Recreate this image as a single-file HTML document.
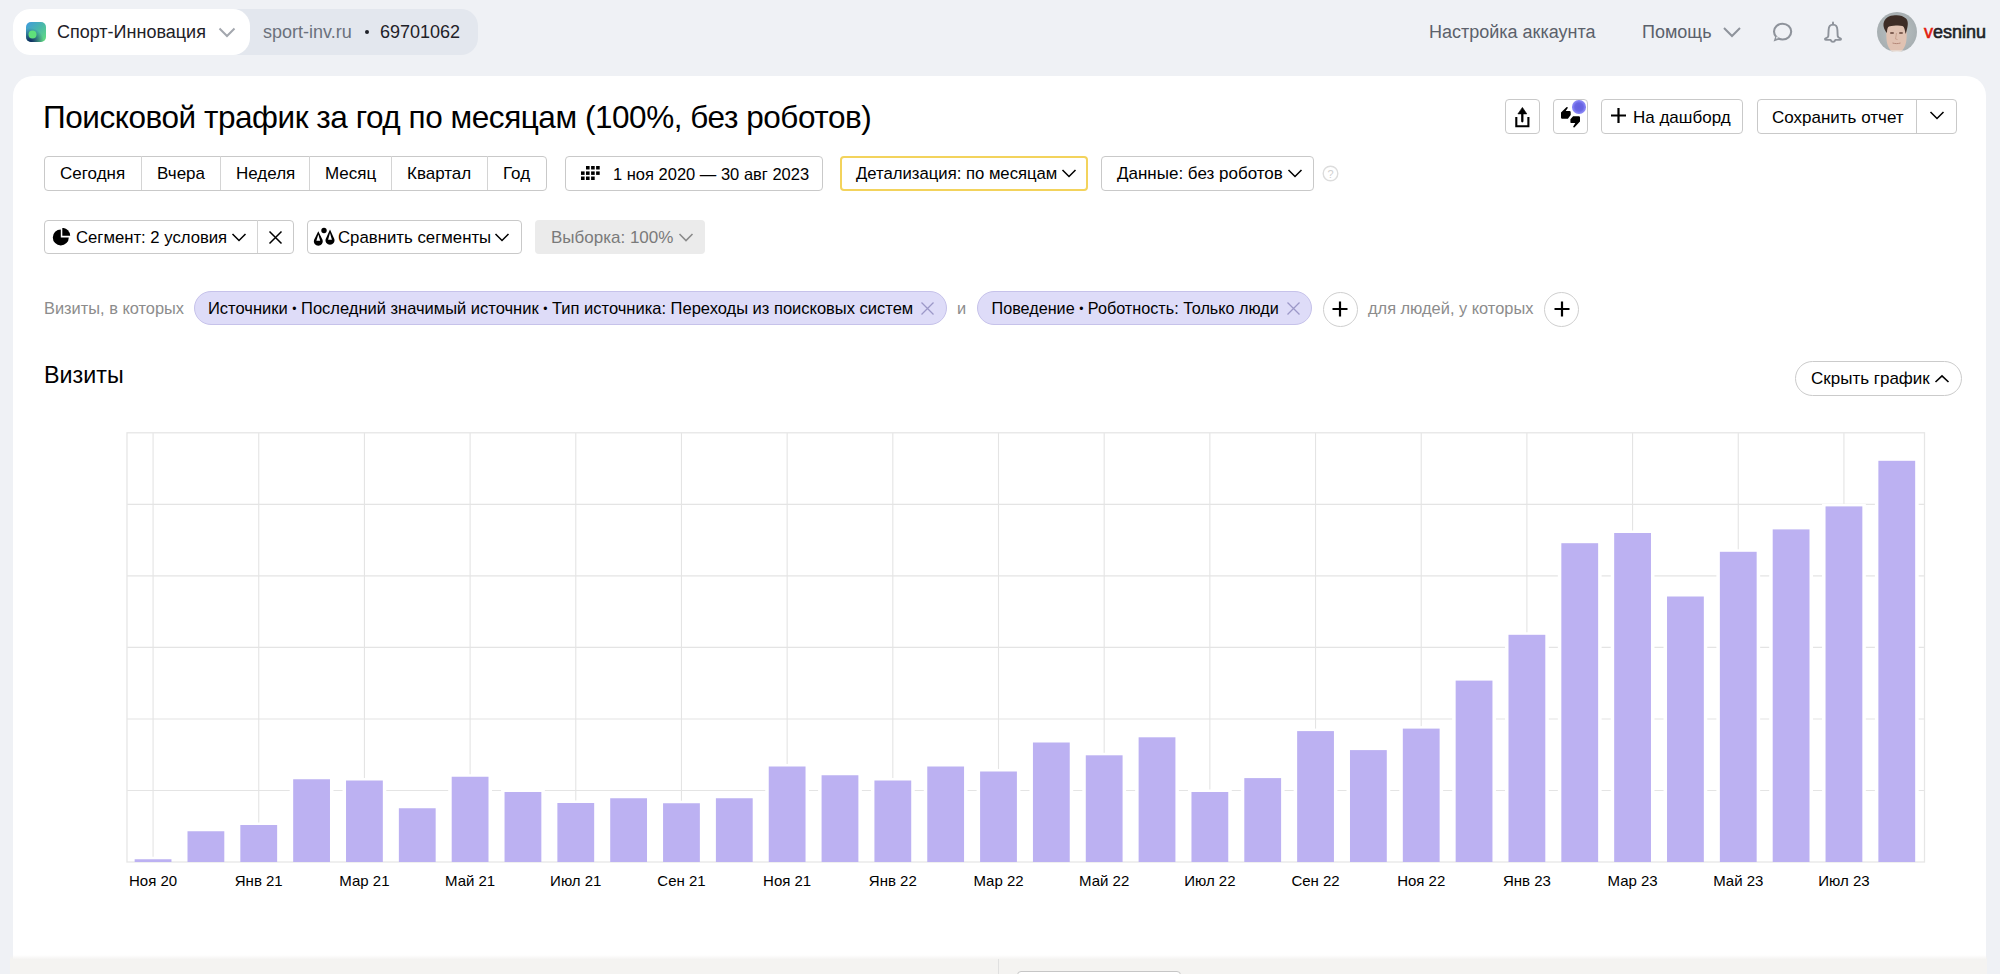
<!DOCTYPE html>
<html><head><meta charset="utf-8">
<style>
*{box-sizing:border-box;margin:0;padding:0}
html,body{width:2000px;height:974px;overflow:hidden}
body{background:#eff1f5;font-family:"Liberation Sans",sans-serif;position:relative;color:#000}
.a{position:absolute;white-space:nowrap}
.t18{font-size:18px;line-height:22px}
.btn{position:absolute;border:1px solid #c9c9c9;border-radius:4px;background:#fff;height:35px}
.bt{position:absolute;font-size:17px;line-height:20px;white-space:nowrap;color:#000}
.chip{position:absolute;height:34px;border-radius:17px;background:#dedcf8;border:1px solid #c6c2ea}
.ft{font-size:16.4px;line-height:20px;white-space:nowrap;position:absolute}
</style></head><body>
<!-- header -->
<div class="a" style="left:13px;top:9px;width:465px;height:46px;border-radius:17px;background:#e3e7ee"></div>
<div class="a" style="left:13px;top:9px;width:237px;height:46px;border-radius:17px;background:#fff"></div>
<svg class="a" style="left:26px;top:22px" width="20" height="20" viewBox="0 0 20 20">
<defs>
<linearGradient id="lg1" x1="0" y1="0" x2="1" y2="1"><stop offset="0" stop-color="#3f9ae0"/><stop offset="0.5" stop-color="#4ab8a8"/><stop offset="1" stop-color="#66e27c"/></linearGradient>
<radialGradient id="lg2" cx="0.2" cy="1" r="0.7"><stop offset="0" stop-color="#0b1f5c"/><stop offset="1" stop-color="#0b1f5c" stop-opacity="0"/></radialGradient>
</defs>
<rect x="0" y="0" width="20" height="20" rx="5" fill="url(#lg1)"/>
<rect x="0" y="0" width="20" height="20" rx="5" fill="url(#lg2)"/>
<circle cx="6.5" cy="12.5" r="4" fill="#5fe07a"/>
</svg>
<div class="a t18" style="left:57px;top:21px;color:#1e2127">Спорт-Инновация</div>
<svg class="a" style="left:218px;top:26px" width="18" height="12" viewBox="0 0 18 12"><path d="M1.5 2.5 L9 10 L16.5 2.5" fill="none" stroke="#a3a7ae" stroke-width="2"/></svg>
<div class="a t18" style="left:263px;top:21px;color:#6b717c">sport-inv.ru</div>
<div class="a" style="left:365px;top:30px;width:4px;height:4px;border-radius:2px;background:#1e2127"></div>
<div class="a t18" style="left:380px;top:21px;color:#1e2127">69701062</div>

<div class="a t18" style="left:1429px;top:21px;color:#5b616b">Настройка аккаунта</div>
<div class="a t18" style="left:1642px;top:21px;color:#5b616b">Помощь</div>
<svg class="a" style="left:1722px;top:25px" width="20" height="13" viewBox="0 0 20 13"><path d="M2 3 L10 11 L18 3" fill="none" stroke="#8e939b" stroke-width="2"/></svg>
<svg class="a" style="left:1770px;top:20px" width="25" height="25" viewBox="0 0 25 25"><ellipse cx="12.6" cy="11.6" rx="8.6" ry="7.9" fill="none" stroke="#8e939b" stroke-width="2.1"/><path d="M5.6 15.8 L3.6 21.6 L10.2 19.2 Z" fill="#8e939b"/><path d="M6.4 16.6 L6 18.8 L8.6 18 Z" fill="#eff1f5"/></svg>
<svg class="a" style="left:1822px;top:20px" width="23" height="25" viewBox="0 0 23 25"><path d="M11 2.4 L11 4.6" stroke="#8e939b" stroke-width="2" stroke-linecap="round"/><path d="M11 4.6 C8 4.6 6.7 7 6.6 10 L6.3 16.2 C6.2 17.3 5 17.9 3.6 18.4 C2.6 18.8 2.9 19.9 4 19.9 L8.6 19.9 C9.1 21.3 10 21.9 11 21.9 C12 21.9 12.9 21.3 13.4 19.9 L18 19.9 C19.1 19.9 19.4 18.8 18.4 18.4 C17 17.9 15.8 17.3 15.7 16.2 L15.4 10 C15.3 7 14 4.6 11 4.6 Z" fill="none" stroke="#8e939b" stroke-width="1.9" stroke-linejoin="round"/></svg>
<svg class="a" style="left:1877px;top:12px" width="40" height="40" viewBox="0 0 40 40">
<defs><clipPath id="cc"><circle cx="20" cy="20" r="20"/></clipPath>
<radialGradient id="bgav" cx="0.5" cy="0.5" r="0.6"><stop offset="0" stop-color="#bcc3c4"/><stop offset="1" stop-color="#a3abae"/></radialGradient></defs>
<g clip-path="url(#cc)">
<rect width="40" height="40" fill="url(#bgav)"/>
<path d="M9.5 27 C9 20 9.5 14 12 12 L27 12 C29.5 14 30 20 29.5 27 C29 35 25 41 19.5 41 C14 41 10 35 9.5 27 Z" fill="#e0c2b2"/>
<path d="M6.5 14 C6 8 10 4 16 3.5 C21 2.5 26 3.5 29 6.5 C31.5 9 31 13.5 30 17 C29.5 19 29 21 28.5 22 C28 18 27.5 15 25.5 14 C22 13 17 13.5 12 14.5 C10.5 15 10 18 10 21 C8.5 19.5 7 17 6.5 14 Z" fill="#3d2d26"/>
<ellipse cx="15" cy="21" rx="2.2" ry="1" fill="#7a5a4e"/>
<ellipse cx="24" cy="21" rx="2.2" ry="1" fill="#7a5a4e"/>
<path d="M19.5 21 L18.5 27 L20.5 27.5" fill="none" stroke="#c39a88" stroke-width="0.8"/>
<path d="M15.5 31 C18 31.8 21 31.8 23.5 31" fill="none" stroke="#b48878" stroke-width="1"/>
<rect x="11" y="38.5" width="18" height="3" fill="#ece9e7"/>
</g></svg>
<div class="a t18" style="left:1924px;top:21px;color:#1e2127;-webkit-text-stroke:0.6px currentColor"><span style="color:#e31b0c">v</span>esninu</div>

<!-- card -->
<div class="a" style="left:13px;top:75.6px;width:1973px;height:920px;border-radius:20px;background:#fff"></div>

<div class="a" style="left:43px;top:97px;font-size:31.5px;line-height:40px;letter-spacing:-0.45px;color:#000">Поисковой трафик за год по месяцам (100%, без роботов)</div>

<!-- top right buttons -->
<div class="btn" style="left:1505px;top:98.5px;width:35px;height:35px"></div>
<svg class="a" style="left:1505px;top:98px" width="36" height="36" viewBox="0 0 36 36"><path d="M11.3 19 L11.3 28.3 L23.4 28.3 L23.4 19" fill="none" stroke="#000" stroke-width="2.1"/><path d="M17.3 15.5 L17.3 23.3" stroke="#000" stroke-width="2.3" stroke-linecap="round"/><path d="M12.9 15.9 L17.4 9.4 L21.8 15.9 Z" fill="#000" stroke="#000" stroke-width="0.6" stroke-linejoin="round"/></svg>
<div class="btn" style="left:1553px;top:98.5px;width:35px;height:35px"></div>
<svg class="a" style="left:1553px;top:98px" width="36" height="36" viewBox="0 0 36 36"><path d="M8 14.6 L13.4 9.3 Q14.3 8.7 14.9 9.7 L12.7 13 L16.6 13 Q17.7 13 17.7 14.2 L17.7 17 L14.9 20.7 L9.2 20.7 Q8 20.7 8 19.5 Z" fill="#000"/><path d="M27 23.6 L21.6 29.2 Q20.7 29.8 20.1 28.8 L22.3 25.1 L18.5 25.1 Q17.4 25.1 17.4 23.9 L17.4 21.2 L20.1 18.2 L25.8 18.2 Q27 18.2 27 19.4 Z" fill="#000"/></svg>
<div class="a" style="left:1572.4px;top:100.1px;width:13.6px;height:13.6px;border-radius:50%;background:radial-gradient(circle,#6460e0 0,#6a66e4 42%,#8784f5 62%,#8e8bf7 100%)"></div>
<div class="btn" style="left:1601px;top:98.5px;width:142px;height:35px"></div>
<svg class="a" style="left:1610px;top:107px" width="17" height="17" viewBox="0 0 17 17"><path d="M8.5 1 L8.5 16 M1 8.5 L16 8.5" stroke="#000" stroke-width="2.2"/></svg>
<div class="bt" style="left:1633px;top:107.5px">На дашборд</div>
<div class="btn" style="left:1757px;top:98.5px;width:200px;height:35px"></div>
<div class="a" style="left:1916px;top:99px;width:1px;height:34px;background:#c9c9c9"></div>
<div class="bt" style="left:1772px;top:107.5px">Сохранить отчет</div>
<svg class="a" style="left:1929px;top:110px" width="16" height="11" viewBox="0 0 16 11"><path d="M1.5 2 L8 8.5 L14.5 2" fill="none" stroke="#000" stroke-width="1.55"/></svg>

<!-- period buttons -->
<div class="btn" style="left:44px;top:155.5px;width:503px"></div>
<div class="a" style="left:141px;top:156px;width:1px;height:34px;background:#d4d4d4"></div>
<div class="a" style="left:220px;top:156px;width:1px;height:34px;background:#d4d4d4"></div>
<div class="a" style="left:309px;top:156px;width:1px;height:34px;background:#d4d4d4"></div>
<div class="a" style="left:391px;top:156px;width:1px;height:34px;background:#d4d4d4"></div>
<div class="a" style="left:487px;top:156px;width:1px;height:34px;background:#d4d4d4"></div>
<div class="bt" style="left:60px;top:164px">Сегодня</div>
<div class="bt" style="left:157px;top:164px">Вчера</div>
<div class="bt" style="left:236px;top:164px">Неделя</div>
<div class="bt" style="left:325px;top:164px">Месяц</div>
<div class="bt" style="left:407px;top:164px">Квартал</div>
<div class="bt" style="left:503px;top:164px">Год</div>

<div class="btn" style="left:565px;top:155.5px;width:258px"></div>
<svg class="a" style="left:581.2px;top:165.5px" width="19" height="14" viewBox="0 0 19 14"><g fill="#000"><rect x="5" y="0" width="3.6" height="3.5"/><rect x="10.1" y="0" width="3.6" height="3.5"/><rect x="15.1" y="0" width="3.6" height="3.5"/><rect x="0" y="5.4" width="3.6" height="3.5"/><rect x="5" y="5.4" width="3.6" height="3.5"/><rect x="10.1" y="5.4" width="3.6" height="3.5"/><rect x="15.1" y="5.4" width="3.6" height="3.5"/><rect x="0" y="10.5" width="3.6" height="3.5"/><rect x="5" y="10.5" width="3.6" height="3.5"/><rect x="10.1" y="10.5" width="3.6" height="3.5"/></g></svg>
<div class="bt" style="left:613px;top:164px;font-size:16.5px">1 ноя 2020 — 30 авг 2023</div>

<div class="btn" style="left:840px;top:155.5px;width:248px;border:2px solid #f3d35c"></div>
<div class="bt" style="left:856px;top:164px;font-size:16.7px">Детализация: по месяцам</div>
<svg class="a" style="left:1061px;top:168px" width="16" height="11" viewBox="0 0 16 11"><path d="M1.5 2 L8 8.5 L14.5 2" fill="none" stroke="#000" stroke-width="1.55"/></svg>

<div class="btn" style="left:1101px;top:155.5px;width:213px"></div>
<div class="bt" style="left:1117px;top:164px">Данные: без роботов</div>
<svg class="a" style="left:1287px;top:168px" width="16" height="11" viewBox="0 0 16 11"><path d="M1.5 2 L8 8.5 L14.5 2" fill="none" stroke="#000" stroke-width="1.55"/></svg>
<svg class="a" style="left:1322px;top:165px" width="17" height="17" viewBox="0 0 17 17"><circle cx="8.5" cy="8.5" r="7.3" fill="none" stroke="#dcdcdc" stroke-width="1.4"/><text x="8.5" y="12.5" text-anchor="middle" font-family="Liberation Sans" font-size="11" fill="#d0d0d0">?</text></svg>

<!-- segment row -->
<div class="btn" style="left:44px;top:219.5px;width:250px;height:34px"></div>
<div class="a" style="left:257px;top:220px;width:1px;height:33px;background:#d4d4d4"></div>
<svg class="a" style="left:52px;top:228px" width="20" height="20" viewBox="0 0 20 20"><path d="M8.8 1.4 A8 8 0 1 0 16.8 9.4 L8.8 9.4 Z" fill="#000"/><path d="M10.3 -0.1 A7.9 7.9 0 0 1 18.2 7.8 L10.3 7.8 Z" fill="#000"/></svg>
<div class="bt" style="left:76px;top:228px;font-size:16.7px">Сегмент: 2 условия</div>
<svg class="a" style="left:231px;top:231.5px" width="16" height="11" viewBox="0 0 16 11"><path d="M1.5 2 L8 8.5 L14.5 2" fill="none" stroke="#000" stroke-width="1.55"/></svg>
<svg class="a" style="left:267px;top:229px" width="17" height="17" viewBox="0 0 17 17"><path d="M2.5 2.5 L14.5 14.5 M14.5 2.5 L2.5 14.5" stroke="#000" stroke-width="1.5"/></svg>

<div class="btn" style="left:307px;top:219.5px;width:215px;height:34px"></div>
<svg class="a" style="left:312px;top:226px" width="24" height="22" viewBox="0 0 24 22"><circle cx="12" cy="4.5" r="2.7" fill="#000"/><path d="M6.3 5.2 L2 14 A4.5 4.5 0 1 0 10.6 14 Z M6.3 8.6 L4.4 14.7 L8.2 14.7 Z" fill="#000" fill-rule="evenodd"/><path d="M18 3.5 L13.7 13 A4.5 4.5 0 1 0 22.3 13 Z M18 6.9 L16.1 13.7 L19.9 13.7 Z" fill="#000" fill-rule="evenodd"/></svg>
<div class="bt" style="left:338px;top:228px;font-size:16.8px">Сравнить сегменты</div>
<svg class="a" style="left:494px;top:231.5px" width="16" height="11" viewBox="0 0 16 11"><path d="M1.5 2 L8 8.5 L14.5 2" fill="none" stroke="#000" stroke-width="1.55"/></svg>

<div class="a" style="left:535px;top:219.5px;width:170px;height:34px;border-radius:4px;background:#ebebeb"></div>
<div class="bt" style="left:551px;top:228px;color:#7a7a7a">Выборка: 100%</div>
<svg class="a" style="left:678px;top:231.5px" width="16" height="11" viewBox="0 0 16 11"><path d="M1.5 2 L8 8.5 L14.5 2" fill="none" stroke="#8a8a8a" stroke-width="1.6"/></svg>

<!-- filter row -->
<div class="ft" style="left:44px;top:297.5px;color:#8c8c8c">Визиты, в которых</div>
<div class="chip" style="left:193.5px;top:291px;width:753px"></div>
<div class="ft" style="left:208px;top:298px;color:#000;font-size:16.5px">Источники <span style="font-size:12px;position:relative;top:-1px">•</span> Последний значимый источник <span style="font-size:12px;position:relative;top:-1px">•</span> Тип источника: Переходы из поисковых систем</div>
<svg class="a" style="left:920px;top:301px" width="15" height="15" viewBox="0 0 15 15"><path d="M1.5 1.5 L13.5 13.5 M13.5 1.5 L1.5 13.5" stroke="#9c98c8" stroke-width="1.3"/></svg>
<div class="ft" style="left:957px;top:298px;color:#8c8c8c">и</div>
<div class="chip" style="left:977px;top:291px;width:335px"></div>
<div class="ft" style="left:991.5px;top:298px;color:#000;font-size:16.2px">Поведение <span style="font-size:12px;position:relative;top:-1px">•</span> Роботность: Только люди</div>
<svg class="a" style="left:1286px;top:301px" width="15" height="15" viewBox="0 0 15 15"><path d="M1.5 1.5 L13.5 13.5 M13.5 1.5 L1.5 13.5" stroke="#9c98c8" stroke-width="1.3"/></svg>
<div class="a" style="left:1322.5px;top:291.5px;width:35px;height:35px;border-radius:50%;border:1px solid #cfcfcf"></div>
<svg class="a" style="left:1331px;top:300px" width="18" height="18" viewBox="0 0 18 18"><path d="M9 1.5 L9 16.5 M1.5 9 L16.5 9" stroke="#000" stroke-width="2.2"/></svg>
<div class="ft" style="left:1368px;top:297.5px;color:#8c8c8c">для людей, у которых</div>
<div class="a" style="left:1544px;top:291.5px;width:35px;height:35px;border-radius:50%;border:1px solid #cfcfcf"></div>
<svg class="a" style="left:1552.5px;top:300px" width="18" height="18" viewBox="0 0 18 18"><path d="M9 1.5 L9 16.5 M1.5 9 L16.5 9" stroke="#000" stroke-width="2.2"/></svg>

<!-- visits -->
<div class="a" style="left:44px;top:361px;font-size:23.3px;line-height:29px;color:#000">Визиты</div>
<div class="a" style="left:1794.5px;top:361px;width:167px;height:35px;border-radius:18px;border:1px solid #cbcbcb;background:#fff"></div>
<div class="bt" style="left:1811px;top:369px;font-size:17px">Скрыть график</div>
<svg class="a" style="left:1934px;top:373px" width="16" height="11" viewBox="0 0 16 11"><path d="M1.5 9 L8 2.8 L14.5 9" fill="none" stroke="#000" stroke-width="1.6"/></svg>

<svg width="2000" height="974" style="position:absolute;left:0;top:0">
<line x1="153.06" y1="432.8" x2="153.06" y2="862" stroke="#e4e4e4" stroke-width="1.1"/>
<line x1="258.74" y1="432.8" x2="258.74" y2="862" stroke="#e4e4e4" stroke-width="1.1"/>
<line x1="364.42" y1="432.8" x2="364.42" y2="862" stroke="#e4e4e4" stroke-width="1.1"/>
<line x1="470.10" y1="432.8" x2="470.10" y2="862" stroke="#e4e4e4" stroke-width="1.1"/>
<line x1="575.78" y1="432.8" x2="575.78" y2="862" stroke="#e4e4e4" stroke-width="1.1"/>
<line x1="681.46" y1="432.8" x2="681.46" y2="862" stroke="#e4e4e4" stroke-width="1.1"/>
<line x1="787.14" y1="432.8" x2="787.14" y2="862" stroke="#e4e4e4" stroke-width="1.1"/>
<line x1="892.82" y1="432.8" x2="892.82" y2="862" stroke="#e4e4e4" stroke-width="1.1"/>
<line x1="998.50" y1="432.8" x2="998.50" y2="862" stroke="#e4e4e4" stroke-width="1.1"/>
<line x1="1104.18" y1="432.8" x2="1104.18" y2="862" stroke="#e4e4e4" stroke-width="1.1"/>
<line x1="1209.86" y1="432.8" x2="1209.86" y2="862" stroke="#e4e4e4" stroke-width="1.1"/>
<line x1="1315.54" y1="432.8" x2="1315.54" y2="862" stroke="#e4e4e4" stroke-width="1.1"/>
<line x1="1421.22" y1="432.8" x2="1421.22" y2="862" stroke="#e4e4e4" stroke-width="1.1"/>
<line x1="1526.90" y1="432.8" x2="1526.90" y2="862" stroke="#e4e4e4" stroke-width="1.1"/>
<line x1="1632.58" y1="432.8" x2="1632.58" y2="862" stroke="#e4e4e4" stroke-width="1.1"/>
<line x1="1738.26" y1="432.8" x2="1738.26" y2="862" stroke="#e4e4e4" stroke-width="1.1"/>
<line x1="1843.94" y1="432.8" x2="1843.94" y2="862" stroke="#e4e4e4" stroke-width="1.1"/>
<line x1="127" y1="504.33" x2="1924.5" y2="504.33" stroke="#e4e4e4" stroke-width="1.1"/>
<line x1="127" y1="575.87" x2="1924.5" y2="575.87" stroke="#e4e4e4" stroke-width="1.1"/>
<line x1="127" y1="647.40" x2="1924.5" y2="647.40" stroke="#e4e4e4" stroke-width="1.1"/>
<line x1="127" y1="718.93" x2="1924.5" y2="718.93" stroke="#e4e4e4" stroke-width="1.1"/>
<line x1="127" y1="790.47" x2="1924.5" y2="790.47" stroke="#e4e4e4" stroke-width="1.1"/>
<rect x="127" y="432.8" width="1797.5" height="429.2" fill="none" stroke="#e6e6e6" stroke-width="1.3"/>
<rect x="131.16" y="856.75" width="43.8" height="4.25" fill="#fff"/>
<rect x="184.00" y="828.75" width="43.8" height="32.25" fill="#fff"/>
<rect x="236.84" y="822.50" width="43.8" height="38.50" fill="#fff"/>
<rect x="289.68" y="776.75" width="43.8" height="84.25" fill="#fff"/>
<rect x="342.52" y="778.00" width="43.8" height="83.00" fill="#fff"/>
<rect x="395.36" y="805.75" width="43.8" height="55.25" fill="#fff"/>
<rect x="448.20" y="774.25" width="43.8" height="86.75" fill="#fff"/>
<rect x="501.04" y="789.50" width="43.8" height="71.50" fill="#fff"/>
<rect x="553.88" y="800.50" width="43.8" height="60.50" fill="#fff"/>
<rect x="606.72" y="795.75" width="43.8" height="65.25" fill="#fff"/>
<rect x="659.56" y="800.75" width="43.8" height="60.25" fill="#fff"/>
<rect x="712.40" y="795.75" width="43.8" height="65.25" fill="#fff"/>
<rect x="765.24" y="764.00" width="43.8" height="97.00" fill="#fff"/>
<rect x="818.08" y="772.75" width="43.8" height="88.25" fill="#fff"/>
<rect x="870.92" y="778.00" width="43.8" height="83.00" fill="#fff"/>
<rect x="923.76" y="764.00" width="43.8" height="97.00" fill="#fff"/>
<rect x="976.60" y="769.00" width="43.8" height="92.00" fill="#fff"/>
<rect x="1029.44" y="740.00" width="43.8" height="121.00" fill="#fff"/>
<rect x="1082.28" y="752.80" width="43.8" height="108.20" fill="#fff"/>
<rect x="1135.12" y="734.80" width="43.8" height="126.20" fill="#fff"/>
<rect x="1187.96" y="789.50" width="43.8" height="71.50" fill="#fff"/>
<rect x="1240.80" y="775.60" width="43.8" height="85.40" fill="#fff"/>
<rect x="1293.64" y="728.60" width="43.8" height="132.40" fill="#fff"/>
<rect x="1346.48" y="747.60" width="43.8" height="113.40" fill="#fff"/>
<rect x="1399.32" y="726.10" width="43.8" height="134.90" fill="#fff"/>
<rect x="1452.16" y="678.10" width="43.8" height="182.90" fill="#fff"/>
<rect x="1505.00" y="632.30" width="43.8" height="228.70" fill="#fff"/>
<rect x="1557.84" y="540.70" width="43.8" height="320.30" fill="#fff"/>
<rect x="1610.68" y="530.50" width="43.8" height="330.50" fill="#fff"/>
<rect x="1663.52" y="594.00" width="43.8" height="267.00" fill="#fff"/>
<rect x="1716.36" y="549.30" width="43.8" height="311.70" fill="#fff"/>
<rect x="1769.20" y="526.90" width="43.8" height="334.10" fill="#fff"/>
<rect x="1822.04" y="503.90" width="43.8" height="357.10" fill="#fff"/>
<rect x="1874.88" y="458.30" width="43.8" height="402.70" fill="#fff"/>
<rect x="134.66" y="859.25" width="36.8" height="2.75" fill="#bcb1f2"/>
<rect x="187.50" y="831.25" width="36.8" height="30.75" fill="#bcb1f2"/>
<rect x="240.34" y="825.00" width="36.8" height="37.00" fill="#bcb1f2"/>
<rect x="293.18" y="779.25" width="36.8" height="82.75" fill="#bcb1f2"/>
<rect x="346.02" y="780.50" width="36.8" height="81.50" fill="#bcb1f2"/>
<rect x="398.86" y="808.25" width="36.8" height="53.75" fill="#bcb1f2"/>
<rect x="451.70" y="776.75" width="36.8" height="85.25" fill="#bcb1f2"/>
<rect x="504.54" y="792.00" width="36.8" height="70.00" fill="#bcb1f2"/>
<rect x="557.38" y="803.00" width="36.8" height="59.00" fill="#bcb1f2"/>
<rect x="610.22" y="798.25" width="36.8" height="63.75" fill="#bcb1f2"/>
<rect x="663.06" y="803.25" width="36.8" height="58.75" fill="#bcb1f2"/>
<rect x="715.90" y="798.25" width="36.8" height="63.75" fill="#bcb1f2"/>
<rect x="768.74" y="766.50" width="36.8" height="95.50" fill="#bcb1f2"/>
<rect x="821.58" y="775.25" width="36.8" height="86.75" fill="#bcb1f2"/>
<rect x="874.42" y="780.50" width="36.8" height="81.50" fill="#bcb1f2"/>
<rect x="927.26" y="766.50" width="36.8" height="95.50" fill="#bcb1f2"/>
<rect x="980.10" y="771.50" width="36.8" height="90.50" fill="#bcb1f2"/>
<rect x="1032.94" y="742.50" width="36.8" height="119.50" fill="#bcb1f2"/>
<rect x="1085.78" y="755.30" width="36.8" height="106.70" fill="#bcb1f2"/>
<rect x="1138.62" y="737.30" width="36.8" height="124.70" fill="#bcb1f2"/>
<rect x="1191.46" y="792.00" width="36.8" height="70.00" fill="#bcb1f2"/>
<rect x="1244.30" y="778.10" width="36.8" height="83.90" fill="#bcb1f2"/>
<rect x="1297.14" y="731.10" width="36.8" height="130.90" fill="#bcb1f2"/>
<rect x="1349.98" y="750.10" width="36.8" height="111.90" fill="#bcb1f2"/>
<rect x="1402.82" y="728.60" width="36.8" height="133.40" fill="#bcb1f2"/>
<rect x="1455.66" y="680.60" width="36.8" height="181.40" fill="#bcb1f2"/>
<rect x="1508.50" y="634.80" width="36.8" height="227.20" fill="#bcb1f2"/>
<rect x="1561.34" y="543.20" width="36.8" height="318.80" fill="#bcb1f2"/>
<rect x="1614.18" y="533.00" width="36.8" height="329.00" fill="#bcb1f2"/>
<rect x="1667.02" y="596.50" width="36.8" height="265.50" fill="#bcb1f2"/>
<rect x="1719.86" y="551.80" width="36.8" height="310.20" fill="#bcb1f2"/>
<rect x="1772.70" y="529.40" width="36.8" height="332.60" fill="#bcb1f2"/>
<rect x="1825.54" y="506.40" width="36.8" height="355.60" fill="#bcb1f2"/>
<rect x="1878.38" y="460.80" width="36.8" height="401.20" fill="#bcb1f2"/>
<text x="153.06" y="885.7" text-anchor="middle" font-family="Liberation Sans" font-size="15" fill="#000">Ноя 20</text>
<text x="258.74" y="885.7" text-anchor="middle" font-family="Liberation Sans" font-size="15" fill="#000">Янв 21</text>
<text x="364.42" y="885.7" text-anchor="middle" font-family="Liberation Sans" font-size="15" fill="#000">Мар 21</text>
<text x="470.10" y="885.7" text-anchor="middle" font-family="Liberation Sans" font-size="15" fill="#000">Май 21</text>
<text x="575.78" y="885.7" text-anchor="middle" font-family="Liberation Sans" font-size="15" fill="#000">Июл 21</text>
<text x="681.46" y="885.7" text-anchor="middle" font-family="Liberation Sans" font-size="15" fill="#000">Сен 21</text>
<text x="787.14" y="885.7" text-anchor="middle" font-family="Liberation Sans" font-size="15" fill="#000">Ноя 21</text>
<text x="892.82" y="885.7" text-anchor="middle" font-family="Liberation Sans" font-size="15" fill="#000">Янв 22</text>
<text x="998.50" y="885.7" text-anchor="middle" font-family="Liberation Sans" font-size="15" fill="#000">Мар 22</text>
<text x="1104.18" y="885.7" text-anchor="middle" font-family="Liberation Sans" font-size="15" fill="#000">Май 22</text>
<text x="1209.86" y="885.7" text-anchor="middle" font-family="Liberation Sans" font-size="15" fill="#000">Июл 22</text>
<text x="1315.54" y="885.7" text-anchor="middle" font-family="Liberation Sans" font-size="15" fill="#000">Сен 22</text>
<text x="1421.22" y="885.7" text-anchor="middle" font-family="Liberation Sans" font-size="15" fill="#000">Ноя 22</text>
<text x="1526.90" y="885.7" text-anchor="middle" font-family="Liberation Sans" font-size="15" fill="#000">Янв 23</text>
<text x="1632.58" y="885.7" text-anchor="middle" font-family="Liberation Sans" font-size="15" fill="#000">Мар 23</text>
<text x="1738.26" y="885.7" text-anchor="middle" font-family="Liberation Sans" font-size="15" fill="#000">Май 23</text>
<text x="1843.94" y="885.7" text-anchor="middle" font-family="Liberation Sans" font-size="15" fill="#000">Июл 23</text>
</svg>

<!-- bottom strip -->
<div class="a" style="left:10px;top:955px;width:1977px;height:19px;background:linear-gradient(#fff0, #f4f3f1 4.5px)"></div>
<div class="a" style="left:998px;top:959px;width:1px;height:15px;background:#e0e0e0"></div>
<div class="a" style="left:1017px;top:971px;width:164px;height:10px;border-radius:4px;border:1px solid #c6c6c6;background:#fff"></div>
</body></html>
